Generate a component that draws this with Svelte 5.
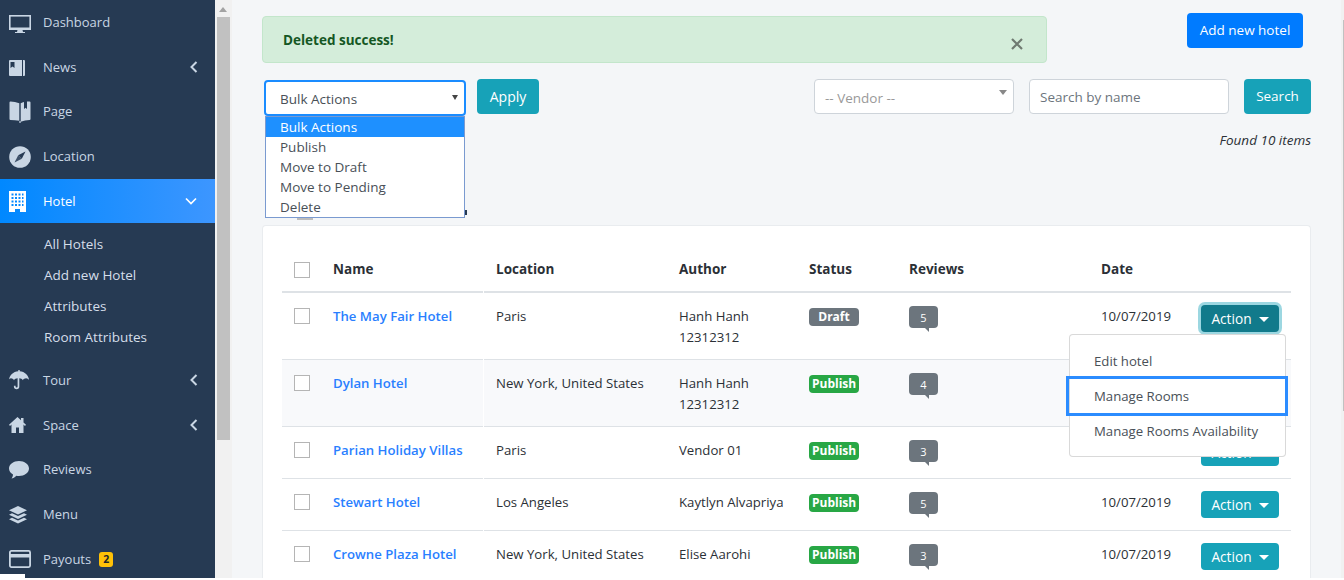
<script>
  const nav = [
    { label: "Dashboard", icon: "monitor" },
    { label: "News", icon: "news", arrow: "left" },
    { label: "Page", icon: "page" },
    { label: "Location", icon: "compass" },
    { label: "Hotel", icon: "hotel", arrow: "down", active: true },
  ];
  const navAfter = [
    { label: "Tour", icon: "umbrella", arrow: "left" },
    { label: "Space", icon: "home", arrow: "left" },
    { label: "Reviews", icon: "comment" },
    { label: "Menu", icon: "layers" },
    { label: "Payouts", icon: "card", badge: "2" },
  ];
  const subNav = ["All Hotels", "Add new Hotel", "Attributes", "Room Attributes"];
  const bulk = ["Bulk Actions", "Publish", "Move to Draft", "Move to Pending", "Delete"];
  const hotels = [
    { name: "The May Fair Hotel", location: "Paris", author: ["Hanh Hanh", "12312312"], status: "Draft", reviews: 5, open: true },
    { name: "Dylan Hotel", location: "New York, United States", author: ["Hanh Hanh", "12312312"], status: "Publish", reviews: 4, alt: true },
    { name: "Parian Holiday Villas", location: "Paris", author: ["Vendor 01"], status: "Publish", reviews: 3 },
    { name: "Stewart Hotel", location: "Los Angeles", author: ["Kaytlyn Alvapriya"], status: "Publish", reviews: 5 },
    { name: "Crowne Plaza Hotel", location: "New York, United States", author: ["Elise Aarohi"], status: "Publish", reviews: 3 },
  ];
</script>

{#snippet icon(name)}
  <svg class="icon" width="22" height="22" viewBox="0 0 22 22" aria-hidden="true">
    {#if name === "monitor"}
      <rect x="0.8" y="3.8" width="20.400" height="13.400" fill="none" stroke="currentColor" stroke-width="1.600" />
      <rect x="0" y="15.500" width="22" height="2.400" fill="currentColor" />
      <path d="M8.500 18h5l.5 2h2v1H6v-1h2z" fill="currentColor" />
    {:else if name === "news"}
      <path d="M1 4h14q1 0 1 1v14q0 1-1 1H1q-1 0-1-1V5q0-1 1-1z" fill="currentColor" />
      <path d="M1.500 6h4v6L3.500 10.500 1.500 12z" fill="#263a53" />
      <path d="M13.500 4v16" stroke="#263a53" stroke-width="1" />
    {:else if name === "page"}
      <path d="M.5 1.500q0-1 1-1 4.500 0 8.800 1.800v17.500Q6 19 1.500 19q-1 0-1-1z" fill="currentColor" />
      <path d="M11.700 2.300Q13.500 1.300 15 1v7l1.500-1.300L18 8V.6h2.500q1 0 1 1V18q0 1-1 1-4.500 0-8.800 1.800z" fill="currentColor" />
      <path d="M11 20v2" stroke="currentColor" stroke-width="1.200" />
    {:else if name === "compass"}
      <circle cx="11" cy="11" r="10.800" fill="currentColor" />
      <path d="M16.500 5.500l-3.700 7.300-3.600-3.600z" fill="#263a53" />
      <path d="M5.500 16.500l3.700-7.300 3.600 3.600z" fill="#263a53" opacity=".85" />
    {:else if name === "hotel"}
      <path fill="#fff" fill-rule="evenodd" d="M0 1h17v21h-6v-3H6v3H0zM2.500 3.500v2h2v-2zm3.500 0v2h2v-2zm3.500 0v2h2v-2zm3.500 0v2h1.500v-2zM2.500 7v2h2V7zM6 7v2h2V7zm3.500 0v2h2V7zM13 7v2h1.500V7zM2.500 10.500v2h2v-2zm3.500 0v2h2v-2zm3.500 0v2h2v-2zm3.500 0v2h1.500v-2zM2.500 14v2h2v-2zM6 14v2h2v-2zm3.500 0v2h2v-2zm3.500 0v2h1.500v-2z" />
    {:else if name === "umbrella"}
      <g transform="translate(0 1)">
        <path d="M9.300 1.200V0h1.400v1.200c5 .4 9 4 9.300 8.800-.8-1-1.700-1.700-2.900-1.700-1.300 0-2.600.7-3.300 1.900-.7-1.200-2-1.900-3.500-1.900v8.300a2.700 2.700 0 0 1-5.400 0v-.8h1.700v.8a1 1 0 0 0 2 0V8.300C7 8.300 5.700 9 5 10.200 4.300 9 3 8.300 2 8.300.9 8.300 0 9 0 10c.3-4.800 4.300-8.400 9.300-8.800z" fill="currentColor" />
      </g>
    {:else if name === "home"}
      <g transform="translate(0 2.500)">
        <path d="M8.500 .5L0 8.300l1 1.100 1.500-1.300v8.400h4.500v-5.500h3v5.500h4.500V8.100L16 9.400l1-1.100-2.500-2.300V1.500H12v2.200z" fill="currentColor" />
      </g>
    {:else if name === "comment"}
      <g transform="translate(0 1)">
        <path d="M10 1c5.500 0 10 3.300 10 7.500S15.500 16 10 16c-.9 0-1.800-.1-2.600-.3C6 17.200 4 18.300 2.500 18.500c.8-1 1.400-2.300 1.500-4C1.600 13.100 0 11 0 8.500 0 4.300 4.500 1 10 1z" fill="currentColor" />
      </g>
    {:else if name === "layers"}
      <g transform="translate(0 1.500)">
        <path d="M9 .5l9 4.300-9 4.300L0 4.800z" fill="currentColor" />
        <path d="M3 7.700l6 2.900 6-2.900 3 1.500-9 4.300-9-4.300z" fill="currentColor" />
        <path d="M3 12.200l6 2.900 6-2.900 3 1.500-9 4.300-9-4.300z" fill="currentColor" />
      </g>
    {:else if name === "card"}
      <rect x="0.900" y="2.900" width="20.200" height="16.200" rx="1.500" fill="none" stroke="currentColor" stroke-width="1.800" />
      <rect x="1" y="6" width="20" height="3.500" fill="currentColor" />
    {/if}
  </svg>
{/snippet}

{#snippet navItem(item)}
  <a class="nav-item" class:active={item.active} href="#top">
    <span class="nav-icon">{@render icon(item.icon)}</span>
    <span>{item.label}</span>
    {#if item.badge}<span class="nav-badge">{item.badge}</span>{/if}
    {#if item.arrow === "left"}
      <svg class="chev" width="8" height="12" viewBox="0 0 8 12"><path d="M6.500 1L1.500 6l5 5" fill="none" stroke="currentColor" stroke-width="2" /></svg>
    {:else if item.arrow === "down"}
      <svg class="chev down" width="12" height="8" viewBox="0 0 12 8"><path d="M1 1.500l5 5 5-5" fill="none" stroke="currentColor" stroke-width="1.700" /></svg>
    {/if}
  </a>
{/snippet}

<div class="page">
  <aside class="sidebar">
    {#each nav as item}{@render navItem(item)}{/each}
    <div class="subnav">
      {#each subNav as s}<a href="#top">{s}</a>{/each}
    </div>
    {#each navAfter as item}{@render navItem(item)}{/each}
    <span class="corner"></span>
  </aside>

  <div class="gutter">
    <span class="gutter-arrow"></span>
    <span class="thumb"></span>
  </div>

  <main class="content">
    <div class="top">
      <div class="alert">
        <strong>Deleted success!</strong>
        <svg class="close" width="12" height="12" viewBox="0 0 12 12"><path d="M1 1l10 10M11 1L1 11" stroke="#6f7a71" stroke-width="2.200" /></svg>
      </div>
      <button class="btn primary add">Add new hotel</button>
    </div>

    <div class="filters">
      <div class="bulk">
        <div class="select focus">Bulk Actions<span class="caret dark"></span></div>
        <ul class="options">
          {#each bulk as b, i}<li class:hl={i === 0}>{b}</li>{/each}
        </ul>
        <span class="peek-box"></span>
        <span class="peek-dot"></span>
      </div>
      <button class="btn info apply">Apply</button>
      <div class="select vendor">-- Vendor --<span class="caret"></span></div>
      <input class="search" placeholder="Search by name" />
      <button class="btn info search-btn">Search</button>
    </div>

    <p class="found">Found 10 items</p>

    <section class="card">
      <table>
        <colgroup>
          <col style="width:39px" /><col style="width:163px" /><col style="width:183px" /><col style="width:130px" />
          <col style="width:100px" /><col style="width:192px" /><col style="width:100px" /><col style="width:102px" />
        </colgroup>
        <thead>
          <tr>
            <th><span class="check"></span></th>
            <th class="sep">Name</th>
            <th>Location</th>
            <th>Author</th>
            <th>Status</th>
            <th>Reviews</th>
            <th>Date</th>
            <th></th>
          </tr>
        </thead>
        <tbody>
          {#each hotels as h}
            <tr class:alt={h.alt}>
              <td><span class="check"></span></td>
              <td class="sep"><a class="name" href="#top">{h.name}</a></td>
              <td>{h.location}</td>
              <td class="author">{#each h.author as line}<div>{line}</div>{/each}</td>
              <td><span class="status" class:draft={h.status === "Draft"}>{h.status}</span></td>
              <td><span class="bubble">{h.reviews}</span></td>
              <td>10/07/2019</td>
              <td class="action-cell">
                <button class="btn info action" class:focused={h.open}>Action<span class="caret-up"></span></button>
                {#if h.open}
                  <div class="menu">
                    <a href="#top">Edit hotel</a>
                    <a href="#top">Manage Rooms</a>
                    <a href="#top">Manage Rooms Availability</a>
                    <span class="mark"></span>
                  </div>
                {/if}
              </td>
            </tr>
          {/each}
        </tbody>
      </table>
    </section>
  </main>
  <span class="edge-track"></span>
  <span class="edge-thumb"></span>
</div>

<style>
  :global(body) {
    margin: 0;
    background: #fff;
    overflow: hidden;
  }
  .page {
    position: relative;
    display: flex;
    width: 1344px;
    height: 578px;
    overflow: hidden;
    background: #f4f6f8;
    font-family: "Open Sans", "Noto Sans", sans-serif;
    font-size: 13.5px;
    line-height: 21px;
    color: #2b3036;
  }
  .sidebar {
    position: relative;
    flex: 0 0 215px;
    background: #263a53;
    color: #c9d6e4;
  }
  .nav-item {
    display: flex;
    align-items: center;
    box-sizing: border-box;
    height: 44.7px;
    padding: 0.4px 0 0 9px;
    color: #c9d6e4;
    text-decoration: none;
    font-size: 13px;
  }
  .nav-item.active {
    background: linear-gradient(90deg, #0088ff, #3d96ff);
    color: #fff;
  }
  .nav-icon {
    display: flex;
    width: 34px;
  }
  .chev {
    position: absolute;
    left: 190px;
  }
  .chev.down {
    left: 185px;
  }
  .nav-badge {
    margin-left: 8px;
    padding: 0 4px;
    height: 15px;
    line-height: 15px;
    font-size: 10.5px;
    font-weight: 700;
    color: #212529;
    background: #ffc107;
    border-radius: 3px;
  }
  .subnav {
    display: flex;
    flex-direction: column;
    padding: 6px 0 4.500px 44px;
  }
  .subnav a {
    height: 31px;
    line-height: 31px;
    color: #d5deea;
    text-decoration: none;
  }
  .corner {
    position: absolute;
    left: 0;
    bottom: 0;
    width: 25px;
    height: 4px;
    background: #fff;
  }
  .gutter {
    position: relative;
    flex: 0 0 17px;
    background: #f1f1f1;
  }
  .gutter-arrow {
    position: absolute;
    left: 4px;
    top: 7px;
    border: 4px solid transparent;
    border-top: 0;
    border-bottom: 5px solid #a3a3a3;
  }
  .thumb {
    position: absolute;
    left: 2px;
    top: 17px;
    width: 13px;
    height: 423px;
    background: #c1c1c1;
  }
  .edge-track {
    position: absolute;
    top: 0;
    right: 0;
    bottom: 0;
    width: 3px;
    background: #f1f1f1;
  }
  .edge-thumb {
    position: absolute;
    top: 20px;
    right: 0;
    width: 1px;
    height: 391px;
    background: #c1c1c1;
  }
  .content {
    flex: 1;
    min-width: 0;
    padding: 13px 33px 0 30px;
  }
  .top {
    display: flex;
    align-items: flex-start;
    justify-content: space-between;
    padding-right: 8px;
  }
  .alert {
    display: flex;
    align-items: center;
    justify-content: space-between;
    box-sizing: border-box;
    width: 785px;
    height: 47px;
    margin-top: 3px;
    padding: 0 23px 0 20px;
    background: #d4edda;
    border: 1px solid #c3e6cb;
    border-radius: 4px;
    color: #155724;
  }
  .alert strong {
    margin-top: 1px;
  }
  .close {
    margin-top: 9px;
  }
  .btn {
    box-sizing: border-box;
    height: 35px;
    padding: 0 12px;
    border: 0;
    border-radius: 4px;
    color: #fff;
    font: inherit;
  }
  .primary {
    background: #007bff;
  }
  .info {
    background: #17a2b8;
  }
  .add {
    width: 116px;
  }
  .filters {
    display: flex;
    align-items: flex-start;
    margin-top: 16px;
  }
  .bulk {
    position: relative;
    margin-left: 2px;
  }
  .select {
    position: relative;
    box-sizing: border-box;
    height: 35px;
    background: #fff;
    border: 1px solid #ced4da;
    border-radius: 4px;
    line-height: 33px;
  }
  .select.focus {
    width: 202px;
    height: 36px;
    margin-top: 1px;
    padding-left: 14px;
    border: 2px solid #1a8cff;
    line-height: 34px;
    color: #495057;
  }
  .caret {
    position: absolute;
    right: 6px;
    top: 10px;
    border: 4px solid transparent;
    border-top: 5px solid #888;
    border-bottom: 0;
  }
  .caret.dark {
    top: 13px;
    right: 6px;
    border-width: 5px 3px 0;
    border-top-color: #444;
  }
  .options {
    position: absolute;
    z-index: 2;
    top: 37px;
    left: 1px;
    box-sizing: border-box;
    width: 200px;
    height: 102px;
    margin: 0;
    padding: 0;
    list-style: none;
    background: #fff;
    border: 1px solid #7a9ad0;
    color: #495057;
  }
  .options li {
    height: 20px;
    padding-left: 14px;
    line-height: 20px;
  }
  .options .hl {
    background: #1e90ff;
    color: #fff;
  }
  .peek-box {
    position: absolute;
    left: 33px;
    top: 139px;
    width: 16px;
    height: 2px;
    background: #bdbdbd;
  }
  .peek-dot {
    position: absolute;
    left: 201px;
    top: 131px;
    width: 2px;
    height: 5px;
    background: #263a53;
  }
  .apply {
    width: 62px;
    margin-left: 11px;
    font-size: 14px;
  }
  .vendor {
    width: 200px;
    margin-left: 275px;
    padding-left: 10px;
    color: #999;
    line-height: 36px;
  }
  .search {
    box-sizing: border-box;
    width: 200px;
    height: 35px;
    margin-left: 15px;
    padding: 0 10px;
    background: #fff;
    border: 1px solid #ced4da;
    border-radius: 4px;
    font: inherit;
  }
  .search::placeholder {
    color: #6c757d;
    opacity: 1;
  }
  .search-btn {
    width: 67px;
    margin-left: 15px;
  }
  .found {
    margin: 14px 0 0;
    text-align: right;
    font-style: italic;
  }
  .card {
    box-sizing: border-box;
    height: 400px;
    margin-top: 74px;
    padding: 20px 20px 0;
    background: #fff;
    border: 1px solid #e9ecef;
    border-bottom: 0;
    border-radius: 4px 4px 0 0;
  }
  table {
    width: 1009px;
    margin: -1px 0 0 -1px;
    border-collapse: collapse;
    table-layout: fixed;
    font-size: 13.2px;
  }
  th {
    box-sizing: border-box;
    height: 47px;
    padding: 3px 12px 0;
    text-align: left;
    font-weight: 700;
    font-size: 13.5px;
    border-bottom: 2px solid #dee2e6;
    vertical-align: middle;
  }
  th .check {
    margin-top: 0;
  }
  td {
    padding: 13px 12px 11px;
    vertical-align: top;
    border-bottom: 1px solid #dee2e6;
  }
  .sep {
    position: relative;
  }
  .sep::after {
    content: "";
    position: absolute;
    top: 0;
    right: 0;
    bottom: -2px;
    width: 1px;
    background: #fff;
  }
  .author {
    white-space: nowrap;
  }
  tr.alt td {
    background: #f8f9fb;
  }
  .check {
    display: block;
    box-sizing: border-box;
    width: 16px;
    height: 16px;
    margin-top: 2px;
    background: #fff;
    border: 1px solid #b5b5b5;
  }
  .name {
    color: #2a7fff;
    font-weight: 600;
    text-decoration: none;
  }
  .status {
    display: inline-block;
    box-sizing: border-box;
    min-width: 50px;
    height: 18px;
    padding: 0 3px;
    margin-top: 2px;
    vertical-align: top;
    line-height: 18px;
    text-align: center;
    font-size: 12px;
    font-weight: 700;
    color: #fff;
    background: #28a745;
    border-radius: 4px;
  }
  .status.draft {
    background: #6c757d;
  }
  .bubble {
    position: relative;
    display: block;
    width: 29px;
    height: 22px;
    line-height: 23px;
    text-align: center;
    font-size: 11px;
    color: #fff;
    background: #6c757d;
    border-radius: 4px;
  }
  .bubble::after {
    content: "";
    position: absolute;
    left: 16px;
    top: 22px;
    border-top: 4px solid #6c757d;
    border-left: 4px solid transparent;
  }
  td.action-cell {
    position: relative;
    padding: 12px;
  }
  .action {
    display: block;
    width: 78px;
    height: 27px;
    padding: 0;
    line-height: 27px;
    font-size: 13.7px;
  }
  .action.focused {
    background: #117a8b;
    box-shadow: 0 0 0 3px rgba(58, 176, 195, 0.5);
  }
  .caret-up {
    display: inline-block;
    margin-left: 7px;
    vertical-align: 2px;
    border: 5px solid transparent;
    border-top: 5px solid #fff;
    border-bottom: 0;
  }
  .menu {
    position: absolute;
    z-index: 3;
    top: 41px;
    right: 5px;
    box-sizing: border-box;
    display: flex;
    flex-direction: column;
    width: 217px;
    height: 123px;
    padding: 9px 0 7px;
    background: #fff;
    border: 1px solid rgba(0, 0, 0, 0.15);
    border-radius: 4px;
  }
  .menu a {
    height: 35px;
    padding-left: 24px;
    line-height: 35px;
    color: #495057;
    text-decoration: none;
  }
  .mark {
    position: absolute;
    left: -4px;
    top: 41px;
    box-sizing: border-box;
    width: 222px;
    height: 40px;
    border: 3px solid #2b8cff;
  }
</style>
